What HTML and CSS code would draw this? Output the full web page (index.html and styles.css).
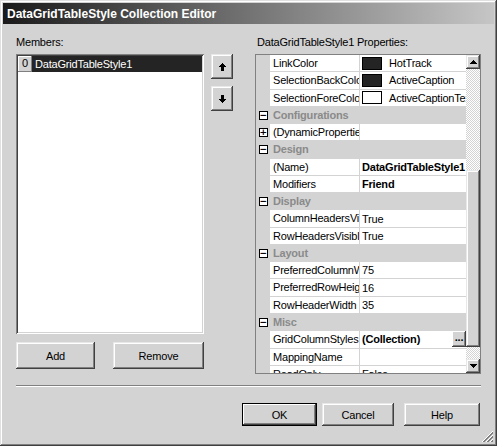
FILE: index.html
```html
<!DOCTYPE html>
<html>
<head>
<meta charset="utf-8">
<link rel="stylesheet" href="styles.css">
</head>
<body>
<div class="window">
  <div class="titlebar"><span class="title">DataGridTableStyle Collection Editor</span></div>
  <div class="cols">
    <div class="left">
      <div class="label">Members:</div>
      <div class="listrow">
        <div class="listbox">
          <div class="item"><span class="idx">0</span><span class="iname">DataGridTableStyle1</span></div>
        </div>
        <div class="arrows">
          <button class="btn arrow"><svg width="7" height="8" viewBox="0 0 7 8" shape-rendering="crispEdges"><path d="M3 0h1v1h1v1h1v1h1v1H5v4H2V4H0V3h1V2h1V1h1z" fill="#000"/></svg></button>
          <button class="btn arrow"><svg width="7" height="8" viewBox="0 0 7 8" shape-rendering="crispEdges"><path d="M2 0h3v4h2v1H6v1H5v1H4v1H3V7H2V6H1V5H0V4h2z" fill="#000"/></svg></button>
        </div>
      </div>
      <div class="addrow">
        <button class="btn add">Add</button>
        <button class="btn remove">Remove</button>
      </div>
    </div>
    <div class="right">
      <div class="label plabel">DataGridTableStyle1 Properties:</div>
      <div class="grid">
        <div class="rows">
          <div class="row"><span class="m"></span><span class="n">LinkColor</span><span class="v"><i class="sw dark"></i>HotTrack</span></div>
          <div class="row"><span class="m"></span><span class="n">SelectionBackColor</span><span class="v"><i class="sw dark"></i>ActiveCaption</span></div>
          <div class="row"><span class="m"></span><span class="n">SelectionForeColor</span><span class="v"><i class="sw"></i>ActiveCaptionText</span></div>
          <div class="row cat"><span class="m"><i class="box">−</i></span><span class="c">Configurations</span></div>
          <div class="row"><span class="m"><i class="box">+</i></span><span class="n">(DynamicProperties)</span><span class="v"></span></div>
          <div class="row cat"><span class="m"><i class="box">−</i></span><span class="c">Design</span></div>
          <div class="row"><span class="m"></span><span class="n">(Name)</span><span class="v b">DataGridTableStyle1</span></div>
          <div class="row"><span class="m"></span><span class="n">Modifiers</span><span class="v b">Friend</span></div>
          <div class="row cat"><span class="m"><i class="box">−</i></span><span class="c">Display</span></div>
          <div class="row"><span class="m"></span><span class="n">ColumnHeadersVisible</span><span class="v">True</span></div>
          <div class="row"><span class="m"></span><span class="n">RowHeadersVisible</span><span class="v">True</span></div>
          <div class="row cat"><span class="m"><i class="box">−</i></span><span class="c">Layout</span></div>
          <div class="row"><span class="m"></span><span class="n">PreferredColumnWidth</span><span class="v">75</span></div>
          <div class="row"><span class="m"></span><span class="n">PreferredRowHeight</span><span class="v">16</span></div>
          <div class="row"><span class="m"></span><span class="n">RowHeaderWidth</span><span class="v">35</span></div>
          <div class="row cat"><span class="m"><i class="box">−</i></span><span class="c">Misc</span></div>
          <div class="row"><span class="m"></span><span class="n">GridColumnStyles</span><span class="v b vbtn"><span class="vt">(Collection)</span><span class="dots">...</span></span></div>
          <div class="row"><span class="m"></span><span class="n">MappingName</span><span class="v"></span></div>
          <div class="row"><span class="m"></span><span class="n">ReadOnly</span><span class="v">False</span></div>
        </div>
        <div class="vscroll">
          <div class="sbtn"><svg width="7" height="4" viewBox="0 0 7 4" shape-rendering="crispEdges"><path d="M3 0h1v1h1v1h1v1h1v1H0V3h1V2h1V1h1z" fill="#000"/></svg></div>
          <div class="track t1"></div>
          <div class="thumb"></div>
          <div class="track t2"></div>
          <div class="sbtn"><svg width="7" height="4" viewBox="0 0 7 4" shape-rendering="crispEdges"><path d="M0 0h7v1H6v1H5v1H4v1H3V3H2V2H1V1H0z" fill="#000"/></svg></div>
        </div>
      </div>
    </div>
  </div>
  <div class="sep"></div>
  <div class="footer">
    <button class="btn fbtn ok">OK</button>
    <button class="btn fbtn cancel">Cancel</button>
    <button class="btn fbtn help">Help</button>
  </div>
  <svg class="grip" width="13" height="13" viewBox="0 0 13 13" shape-rendering="crispEdges">
    <path d="M12 1L1 12M12 5L5 12M12 9L9 12" stroke="#fff" stroke-width="1"/>
    <path d="M12 2L2 12M12 3L3 12M12 6L6 12M12 7L7 12M12 10L10 12M12 11L11 12" stroke="#808080" stroke-width="1"/>
  </svg>
</div>
</body>
</html>
```

FILE: styles.css
```css
html, body {
  margin: 0;
  padding: 0;
  background: #ffffff;
}
body {
  font-family: "Liberation Sans", Arial, sans-serif;
  font-size: 11px;
  letter-spacing: -0.2px;
  color: #000;
}
.window {
  position: relative;
  width: 497px;
  height: 446px;
  box-sizing: border-box;
  background: #d3d3d3;
  padding: 3px;
  box-shadow: inset -1px -1px #404040, inset 1px 1px #e0e0e0, inset -2px -2px #808080, inset 2px 2px #ffffff;
}
.titlebar {
  height: 21px;
  background: linear-gradient(to right, #1a1a1a 0%, #5a5a5a 35%, #c6c6c6 100%);
  display: flex;
  align-items: center;
  padding-left: 4px;
}
.title {
  color: #fff;
  font-weight: bold;
  font-size: 12px;
  letter-spacing: 0;
  white-space: nowrap;
}
.cols {
  display: flex;
  padding-left: 13px;
  margin-top: 12px;
}
.left {
  width: 217px;
}
.label {
  height: 13px;
  line-height: 13px;
  margin-bottom: 5px;
}
.plabel {
  padding-left: 2px;
}
.listrow {
  display: flex;
  gap: 7px;
}
.listbox {
  width: 188px;
  height: 280px;
  box-sizing: border-box;
  background: #fff;
  padding: 2px;
  box-shadow: inset 1px 1px #808080, inset -1px -1px #ffffff, inset 2px 2px #404040, inset -2px -2px #d3d3d3;
}
.item {
  display: flex;
  height: 16px;
  background: #242424;
  color: #fff;
  align-items: center;
}
.idx {
  width: 14px;
  height: 16px;
  box-sizing: border-box;
  background: #d3d3d3;
  color: #000;
  text-align: center;
  line-height: 15px;
  box-shadow: inset -1px -1px #808080, inset 1px 1px #ffffff;
}
.iname {
  padding-left: 3px;
}
.arrows {
  display: flex;
  flex-direction: column;
  gap: 7px;
}
.btn {
  font-family: "Liberation Sans", Arial, sans-serif;
  font-size: 11px;
  letter-spacing: -0.2px;
  color: #000;
  background: #d3d3d3;
  border: none;
  padding: 0;
  margin: 0;
  display: flex;
  align-items: center;
  justify-content: center;
  box-shadow: inset -1px -1px #404040, inset 1px 1px #e8e8e8, inset -2px -2px #808080, inset 2px 2px #ffffff;
}
.arrow {
  width: 22px;
  height: 25px;
}
.addrow {
  display: flex;
  gap: 18px;
  margin-top: 8px;
}
.add {
  width: 79px;
  height: 27px;
}
.remove {
  width: 91px;
  height: 27px;
}
.right {
  margin-left: 22px;
}
.grid {
  display: flex;
  width: 226px;
  height: 320px;
  margin-top: 1px;
  box-sizing: border-box;
  border: 1px solid #808080;
  background: #d3d3d3;
  overflow: hidden;
}
.rows {
  width: 210px;
  display: flex;
  flex-direction: column;
}
.row {
  display: flex;
  flex: 0 0 17.28px;
  height: 17.28px;
  box-sizing: border-box;
  line-height: 16px;
  white-space: nowrap;
}
.m {
  width: 14px;
  flex: 0 0 14px;
  background: #d3d3d3;
  display: flex;
  align-items: center;
  justify-content: center;
}
.n {
  width: 90px;
  flex: 0 0 90px;
  box-sizing: border-box;
  background: #fff;
  border-bottom: 1px solid #d3d3d3;
  border-right: 1px solid #d3d3d3;
  padding-left: 3px;
  overflow: hidden;
}
.v {
  flex: 1;
  min-width: 0;
  box-sizing: border-box;
  background: #fff;
  border-bottom: 1px solid #d3d3d3;
  padding-left: 2px;
  overflow: hidden;
  display: flex;
  align-items: center;
}
.b {
  font-weight: bold;
}
.vbtn {
  justify-content: space-between;
  padding-right: 0;
}
.dots {
  flex: 0 0 14px;
  width: 14px;
  height: 16px;
  box-sizing: border-box;
  background: #d3d3d3;
  font-weight: bold;
  text-align: center;
  line-height: 13px;
  box-shadow: inset -1px -1px #404040, inset 1px 1px #ffffff, inset -2px -2px #808080;
}
.sw {
  display: inline-block;
  flex: 0 0 20px;
  width: 20px;
  height: 13px;
  box-sizing: border-box;
  border: 1px solid #000;
  background: #fff;
  margin-right: 7px;
}
.sw.dark {
  background: #242424;
}
.cat {
  background: #d3d3d3;
}
.c {
  padding-left: 3px;
  font-weight: bold;
  color: #8a8a8a;
}
.box {
  display: block;
  width: 9px;
  height: 9px;
  box-sizing: border-box;
  border: 1px solid #000;
  background: #fff;
  font-style: normal;
  font-size: 9px;
  line-height: 7px;
  text-align: center;
  font-family: "DejaVu Sans", sans-serif;
  font-weight: bold;
  letter-spacing: 0;
}
.vscroll {
  width: 14px;
  display: flex;
  flex-direction: column;
}
.sbtn {
  height: 14px;
  flex: 0 0 14px;
  background: #d3d3d3;
  display: flex;
  align-items: center;
  justify-content: center;
  box-shadow: inset -1px -1px #404040, inset 1px 1px #e8e8e8, inset -2px -2px #808080, inset 2px 2px #ffffff;
}
.track {
  background-color: #ffffff;
  background-image: repeating-conic-gradient(#d3d3d3 0 25%, #ffffff 0 50%);
  background-size: 2px 2px;
}
.t1 {
  height: 101px;
}
.thumb {
  height: 177px;
  background: #d3d3d3;
  box-shadow: inset -1px -1px #404040, inset 1px 1px #e8e8e8, inset -2px -2px #808080, inset 2px 2px #ffffff;
}
.t2 {
  flex: 1;
}
.sep {
  margin: 11px 13px 0 13px;
  width: 465px;
  height: 2px;
  border-top: 1px solid #808080;
  border-bottom: 1px solid #ffffff;
  box-sizing: border-box;
}
.footer {
  display: flex;
  justify-content: flex-end;
  padding-right: 14px;
  margin-top: 16px;
}
.fbtn {
  height: 23px;
}
.ok {
  width: 75px;
  margin-right: 5px;
  box-shadow: inset 0 0 0 1px #000, inset -2px -2px #404040, inset 2px 2px #ffffff, inset -3px -3px #808080;
}
.cancel {
  width: 72px;
  margin-right: 10px;
}
.help {
  width: 76px;
}
.grip {
  position: absolute;
  right: 3px;
  bottom: 3px;
}
```
